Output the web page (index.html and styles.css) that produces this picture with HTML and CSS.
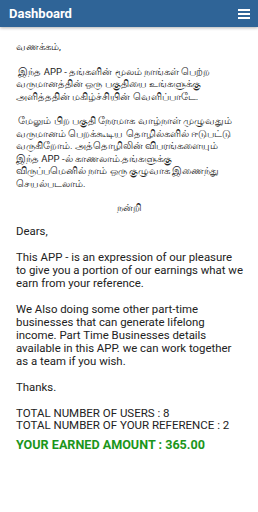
FILE: index.html
```html
<!DOCTYPE html>
<html lang="ta">
<head>
<meta charset="UTF-8">
<meta name="viewport" content="width=device-width, initial-scale=1.0">
<title>Dashboard</title>
<link rel="stylesheet" href="styles.css">
</head>
<body>

<!-- ヘッダー -->
<div class="topBar">
  <span class="topTitle">Dashboard</span>
  <svg class="menuIcon" width="12" height="10" viewBox="0 0 12 10">
    <rect x="0" y="0" width="12" height="2" fill="#fff"/>
    <rect x="0" y="4" width="12" height="2" fill="#fff"/>
    <rect x="0" y="8" width="12" height="2" fill="#fff"/>
  </svg>
</div>

<!-- 本文 -->
<div class="content">
  <p class="tamil">வணக்கம்,</p>
  <p class="tamil">&nbsp;இந்த APP - தங்களின் மூலம் நாங்கள் பெற்ற வருமானத்தின் ஒரு பகுதியை உங்களுக்கு அளித்ததின் மகிழ்ச்சியின் வெளிப்பாடே.</p>
  <p class="tamil">&nbsp;மேலும் பிற பகுதி நேரமாக வாழ்நாள் முழுவதும் வருமானம் பெறக்கூடிய தொழில்களில் ஈடுபட்டு வருகிறோம். அத்தொழிலின் விபரங்களையும் இந்த APP -ல் காணலாம்.தங்களுக்கு விருப்பமெனில் நாம் ஒரு குழுவாக இணைந்து செயல்படலாம்.</p>
  <p class="tamil thanks">நன்றி</p>
  <p>Dears,</p>
  <p>This APP - is an expression of our pleasure to give you a portion of our earnings what we earn from your reference.</p>
  <p>We Also doing some other part-time businesses that can generate lifelong income. Part Time Businesses details available in this APP. we can work together as a team if you wish.</p>
  <p>Thanks.</p>
  <div class="stats">
    <div>TOTAL NUMBER OF USERS : 8</div>
    <div>TOTAL NUMBER OF YOUR REFERENCE : 2</div>
  </div>
  <div class="earned">YOUR EARNED AMOUNT : 365.00</div>
</div>

</body>
</html>
```

FILE: styles.css
```css
body {
  margin: 0;
  font-family: Roboto, 'Noto Sans', sans-serif;
  background-color: #fff;
  color: #222;
}
.topBar {
  height: 27px;
  background-color: #2f6497;
  display: flex;
  align-items: center;
  justify-content: space-between;
  padding: 0 8px 0 9px;
  box-shadow: 0 1px 3px rgba(0, 0, 0, 0.3);
}
.topTitle {
  color: #fff;
  font-weight: bold;
  font-size: 13px;
}
.menuIcon {
  display: block;
}
.content {
  padding: 14px 15px 0 16px;
  font-size: 11.4px;
  line-height: 13px;
}
.content p {
  margin: 0 0 13px 0;
}
.content p.tamil {
  font-size: 9.5px;
  line-height: 12.5px;
  margin-bottom: 12px;
}
.content p.thanks {
  text-align: center;
  margin-bottom: 10px;
}
.stats {
  font-size: 11.5px;
  line-height: 12.5px;
}
.earned {
  margin-top: 6px;
  color: #1b961b;
  font-weight: bold;
  font-size: 12.6px;
}
```
